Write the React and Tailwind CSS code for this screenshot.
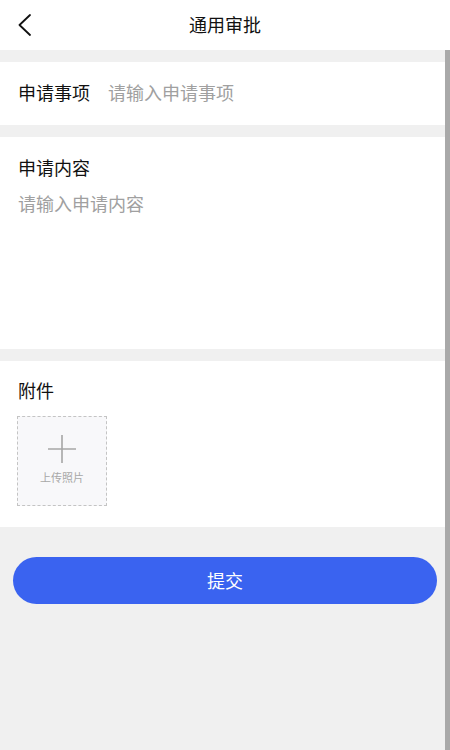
const font = { fontFamily: '"Noto Sans CJK SC", "Noto Sans", sans-serif' }

export default function App() {
  return (
    <div className="relative h-[750px] w-[450px] overflow-hidden bg-[#f0f0f0]" style={font}>
      {/* Header */}
      <div className="relative flex h-[50px] items-center justify-center bg-white pb-[2px]">
        <button className="absolute left-[17px] top-[14px]">
          <svg width="15" height="22" viewBox="0 0 15 22">
            <path d="M13 1L2.5 11L13 21" stroke="#111" strokeWidth="1.8" fill="none" strokeLinecap="round" strokeLinejoin="round" />
          </svg>
        </button>
        <h1 className="text-[18px] leading-none text-[#111]">通用审批</h1>
      </div>

      {/* 申请事项 */}
      <div className="mt-[12px] flex h-[63px] items-center bg-white px-[18px] pb-[3px]">
        <span className="text-[18px] text-[#111]">申请事项</span>
        <span className="ml-[18px] text-[18px] text-[#a0a0a0]">请输入申请事项</span>
      </div>

      {/* 申请内容 */}
      <div className="mt-[12px] h-[212px] bg-white px-[18px] pt-[17px]">
        <div className="text-[18px] leading-[26px] text-[#111]">申请内容</div>
        <div className="mt-[10px] text-[18px] leading-[26px] text-[#a0a0a0]">请输入申请内容</div>
      </div>

      {/* 附件 */}
      <div className="mt-[12px] bg-white px-[17px] pb-[21px] pt-[16px]">
        <div className="pl-px text-[18px] leading-[26px] text-[#111]">附件</div>
        <div className="mt-[13px] flex h-[90px] w-[90px] flex-col items-center border border-dashed border-[#c4c4c4] bg-[#f8f8fa]">
          <svg className="mt-[17px]" width="30" height="30" viewBox="0 0 30 30">
            <path d="M15 1v28M1 15h28" stroke="#a6a6a6" strokeWidth="1.6" fill="none" />
          </svg>
          <span className="mt-[6px] text-[11px] leading-[14px] text-[#a8a8a8]">上传照片</span>
        </div>
      </div>

      {/* 提交 */}
      <div className="mx-[13px] mt-[30px]">
        <button className="flex h-[47px] w-full items-center justify-center rounded-full bg-[#3a63f0] text-[18px] text-white">
          提交
        </button>
      </div>

      {/* scrollbar */}
      <div className="absolute bottom-0 right-0 top-[50px] w-[5px] bg-[#a9a9a9]" />
    </div>
  )
}
